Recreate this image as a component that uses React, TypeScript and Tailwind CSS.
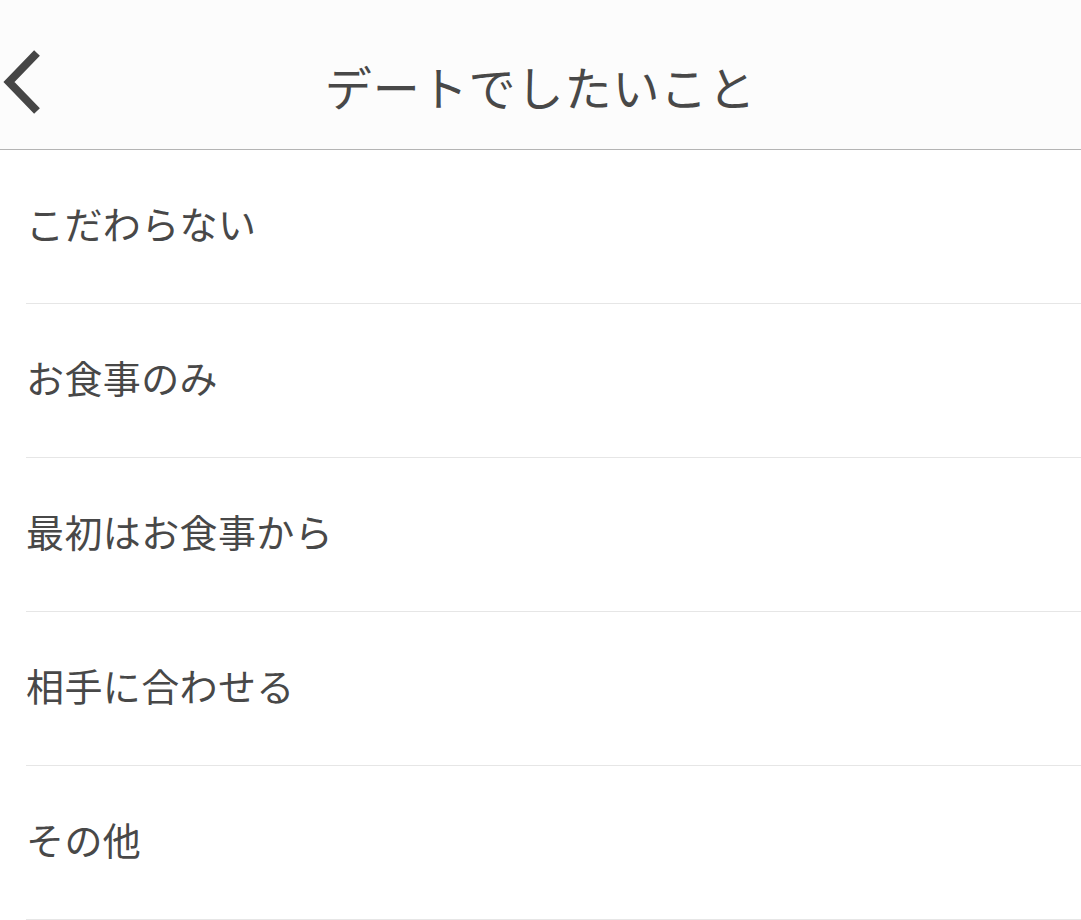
import React from 'react';

const options = ['こだわらない', 'お食事のみ', '最初はお食事から', '相手に合わせる', 'その他'];

export default function App() {
  return (
    <div className="min-h-screen w-full bg-white text-[#484848] font-['Noto_Sans_CJK_JP','Noto_Sans',sans-serif]">
      {/* ヘッダー */}
      <header className="relative h-[150px] bg-[#fcfcfc] border-b border-[#b4b4b4] flex items-center justify-center">
        <button className="absolute left-0 top-[47px] w-[48px] h-[72px] flex items-center justify-center">
          <svg width="48" height="72" viewBox="0 0 48 72">
            <polyline points="37,6 9,35 37,64" fill="none" stroke="#464646" strokeWidth="8" strokeLinejoin="miter" />
          </svg>
        </button>
        <h1 className="text-[47px] leading-none font-normal tracking-[0.02em] mt-[22px]">デートでしたいこと</h1>
      </header>

      <ul>
        {options.map((label) => (
          <li key={label} className="h-[154px] ml-[26px] border-b border-[#e6e6e6] flex items-center">
            <span className="text-[38px] leading-none tracking-[0.01em] mt-[-8px]">{label}</span>
          </li>
        ))}
      </ul>
    </div>
  );
}
